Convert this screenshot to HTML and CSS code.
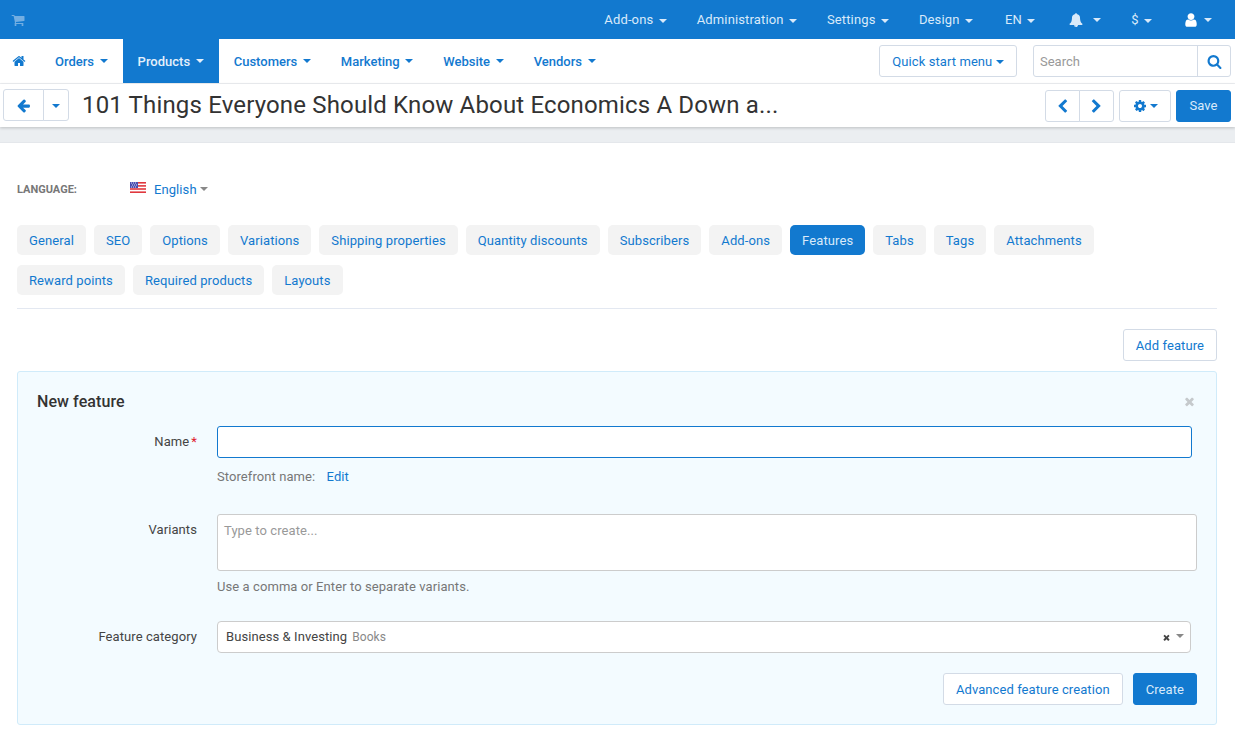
FILE: index.html
```html
<!DOCTYPE html>
<html lang="en">
<head>
<meta charset="UTF-8" />
<meta name="viewport" content="width=device-width, initial-scale=1" />
<title>Edit product</title>
<link rel="stylesheet" href="styles.css">
</head>
<body>

<svg class="sprite" xmlns="http://www.w3.org/2000/svg">
  <symbol id="i-cart" viewBox="0 0 1792 1792"><path d="M704 1536q0 52-38 90t-90 38-90-38-38-90 38-90 90-38 90 38 38 90zm896 0q0 52-38 90t-90 38-90-38-38-90 38-90 90-38 90 38 38 90zm128-1088v512q0 24-16.500 42.500t-40.500 21.500l-1044 122q13 60 13 70 0 16-24 64h920q26 0 45 19t19 45-19 45-45 19h-1024q-26 0-45-19t-19-45q0-11 8-31.500t16-36 21.500-40 15.500-29.500l-177-823h-204q-26 0-45-19t-19-45 19-45 45-19h256q16 0 28.500 6.500t19.500 15.500 13 24.500 8 26 5.500 29.500 4.500 26h1201q26 0 45 19t19 45z"/></symbol>
  <symbol id="i-home" viewBox="0 0 1792 1792"><path d="M1472 992v480q0 26-19 45t-45 19h-384v-384h-256v384h-384q-26 0-45-19t-19-45v-480q0-1 .5-3t.5-3l575-474 575 474q1 2 1 6zm223-69l-62 74q-8 9-21 11h-3q-13 0-21-7l-692-577-692 577q-12 8-24 7-13-2-21-11l-62-74q-8-10-7-23.500t11-21.500l719-599q32-26 76-26t76 26l244 204v-195q0-14 9-23t23-9h192q14 0 23 9t9 23v408l219 182q10 8 11 21.500t-7 23.500z"/></symbol>
  <symbol id="i-bell" viewBox="0 0 1792 1792"><path d="M912 1696q0-16-16-16-59 0-101.500-42.500t-42.500-101.500q0-16-16-16t-16 16q0 73 51.500 124.500t124.500 51.500q16 0 16-16zm816-288q0 52-38 90t-90 38h-448q0 106-75 181t-181 75-181-75-75-181h-448q-52 0-90-38t-38-90q50-42 91-88t85-119.500 74.500-158.500 50-206 19.500-260q0-152 117-282.500t307-158.500q-8-19-8-39 0-40 28-68t68-28 68 28 28 68q0 20-8 39 190 28 307 158.500t117 282.500q0 139 19.500 260t50 206 74.500 158.500 85 119.500 91 88z"/></symbol>
  <symbol id="i-user" viewBox="0 0 1792 1792"><path d="M1536 1399q0 109-62.500 187t-150.500 78h-854q-88 0-150.500-78t-62.500-187q0-85 8.500-160.500t31.500-152 58.500-131 94-89 134.500-34.500q131 128 313 128t313-128q76 0 134.500 34.500t94 89 58.500 131 31.500 152 8.500 160.500zm-256-887q0 159-112.500 271.500t-271.500 112.500-271.500-112.500-112.500-271.500 112.500-271.500 271.500-112.500 271.500 112.500 112.500 271.500z"/></symbol>
  <symbol id="i-search" viewBox="0 0 1792 1792"><path d="M1216 832q0-185-131.500-316.500t-316.500-131.500-316.500 131.500-131.500 316.500 131.500 316.500 316.500 131.500 316.500-131.500 131.500-316.500zm512 832q0 52-38 90t-90 38q-54 0-90-38l-343-342q-179 124-399 124-143 0-273.500-55.500t-225-150-150-225-55.500-273.500 55.500-273.500 150-225 225-150 273.500-55.500 273.500 55.500 225 150 150 225 55.500 273.500q0 220-124 399l343 343q37 37 37 90z"/></symbol>
  <symbol id="i-back" viewBox="0 0 1792 1792"><path d="M1664 896v128q0 53-32.500 90.500t-84.500 37.500h-704l293 294q38 36 38 90t-38 90l-75 76q-37 37-90 37-52 0-91-37l-651-652q-37-37-37-90 0-52 37-91l651-650q38-38 91-38 52 0 90 38l75 74q38 38 38 91t-38 91l-293 293h704q52 0 84.500 37.500t32.500 90.500z"/></symbol>
  <symbol id="i-prev" viewBox="0 0 1792 1792"><path d="M1427 301l-531 531 531 531q19 19 19 45t-19 45l-166 166q-19 19-45 19t-45-19l-742-742q-19-19-19-45t19-45l742-742q19-19 45-19t45 19l166 166q19 19 19 45t-19 45z"/></symbol>
  <symbol id="i-next" viewBox="0 0 1792 1792"><path d="M1363 877l-742 742q-19 19-45 19t-45-19l-166-166q-19-19-19-45t19-45l531-531-531-531q-19-19-19-45t19-45l166-166q19-19 45-19t45 19l742 742q19 19 19 45t-19 45z"/></symbol>
  <symbol id="i-cog" viewBox="0 0 1792 1792"><path d="M1152 896q0-106-75-181t-181-75-181 75-75 181 75 181 181 75 181-75 75-181zm512-109v222q0 12-8 23t-20 13l-185 28q-19 54-39 91 35 50 107 138 10 12 10 25t-9 23q-27 37-99 108t-94 71q-12 0-26-9l-138-108q-44 23-91 38-16 136-29 186-7 28-36 28h-222q-14 0-24.500-8.500t-11.500-21.500l-28-184q-49-16-90-37l-141 107q-10 9-25 9-14 0-25-11-126-114-165-168-7-10-7-23 0-12 8-23 15-21 51-66.500t54-70.500q-27-50-41-99l-183-27q-13-2-21-12.500t-8-23.500v-222q0-12 8-23t19-13l186-28q14-46 39-92-40-57-107-138-10-12-10-24 0-10 9-23 26-36 98.500-107.500t94.500-71.500q13 0 26 10l138 107q44-23 91-38 16-136 29-186 7-28 36-28h222q14 0 24.500 8.500t11.500 21.500l28 184q49 16 90 37l142-107q9-9 24-9 13 0 25 10 129 119 165 170 7 8 7 22 0 12-8 23-15 21-51 66.500t-54 70.500q26 50 41 98l183 28q13 2 21 12.500t8 23.500z"/></symbol>
  <symbol id="i-times" viewBox="0 0 1792 1792"><path d="M1490 1322q0 40-28 68l-136 136q-28 28-68 28t-68-28l-294-294-294 294q-28 28-68 28t-68-28l-136-136q-28-28-28-68t28-68l294-294-294-294q-28-28-28-68t28-68l136-136q28-28 68-28t68 28l294 294 294-294q28-28 68-28t68 28l136 136q28 28 28 68t-28 68l-294 294 294 294q28 28 28 68z"/></symbol>
</svg>

<header class="topbar">
  <svg class="icon cart-icon"><use href="#i-cart"/></svg>
  <nav class="topmenu">
    <a class="top-addons">Add-ons <i class="caret"></i></a>
    <a class="top-admin">Administration <i class="caret"></i></a>
    <a class="top-settings">Settings <i class="caret"></i></a>
    <a class="top-design">Design <i class="caret"></i></a>
    <a class="top-lang">EN <i class="caret"></i></a>
    <a class="top-bell"><svg class="icon bell-icon"><use href="#i-bell"/></svg><i class="caret"></i></a>
    <a class="top-cur">$ <i class="caret"></i></a>
    <a class="top-user"><svg class="icon user-icon"><use href="#i-user"/></svg><i class="caret"></i></a>
  </nav>
</header>

<div class="mainnav">
  <a class="nav-home"><svg class="icon home-icon"><use href="#i-home"/></svg></a>
  <a>Orders <i class="caret"></i></a>
  <a class="active">Products <i class="caret"></i></a>
  <a>Customers <i class="caret"></i></a>
  <a>Marketing <i class="caret"></i></a>
  <a>Website <i class="caret"></i></a>
  <a>Vendors <i class="caret"></i></a>
  <div class="nav-right">
    <button class="btn quick-btn">Quick start menu <i class="caret"></i></button>
    <div class="search-box">
      <input type="text" placeholder="Search" />
      <button><svg class="icon search-icon"><use href="#i-search"/></svg></button>
    </div>
  </div>
</div>

<div class="toolbar">
  <div class="btn-group back-group">
    <button class="btn back-btn"><svg class="icon back-icon"><use href="#i-back"/></svg></button>
    <button class="btn back-more"><i class="caret"></i></button>
  </div>
  <h1>101 Things Everyone Should Know About Economics A Down a...</h1>
  <div class="toolbar-right">
    <div class="btn-group">
      <button class="btn arrow-btn"><svg class="icon arrow-icon"><use href="#i-prev"/></svg></button>
      <button class="btn arrow-btn"><svg class="icon arrow-icon"><use href="#i-next"/></svg></button>
    </div>
    <button class="btn cog-btn"><svg class="icon cog-icon"><use href="#i-cog"/></svg><i class="caret"></i></button>
    <button class="btn btn-primary save-btn">Save</button>
  </div>
</div>
<div class="band"></div>

<main class="content">
  <div class="language">
    <span class="language-label">LANGUAGE:</span>
    <svg class="flag" viewBox="0 0 16 11">
      <rect width="16" height="11" fill="#fff"/>
      <rect width="16" height="1.6" fill="#e0383e"/>
      <rect y="3.1" width="16" height="1.6" fill="#e0383e"/>
      <rect y="6.2" width="16" height="1.6" fill="#e0383e"/>
      <rect y="9.4" width="16" height="1.6" fill="#e0383e"/>
      <rect width="8" height="6" fill="#4a4fb0"/>
      <path d="M1 1h1M3 1h1M5 1h1M2 3h1M4 3h1M6 3h1M1 5h1M3 5h1M5 5h1" stroke="#fff" stroke-width=".8"/>
    </svg>
    <a class="language-link">English</a><i class="caret caret-gray"></i>
  </div>

  <ul class="tabs">
    <li>General</li>
    <li>SEO</li>
    <li>Options</li>
    <li>Variations</li>
    <li>Shipping properties</li>
    <li>Quantity discounts</li>
    <li>Subscribers</li>
    <li>Add-ons</li>
    <li class="active">Features</li>
    <li>Tabs</li>
    <li>Tags</li>
    <li>Attachments</li>
    <li>Reward points</li>
    <li>Required products</li>
    <li>Layouts</li>
  </ul>

  <div class="actions">
    <button class="btn">Add feature</button>
  </div>

  <section class="panel">
    <div class="panel-head">
      <h3>New feature</h3>
      <svg class="icon close-icon"><use href="#i-times"/></svg>
    </div>

    <div class="row row-name">
      <label>Name<span class="req">*</span></label>
      <div class="field">
        <input class="text-input" type="text" />
        <p class="hint">Storefront name: <a>Edit</a></p>
      </div>
    </div>

    <div class="row row-variants">
      <label>Variants</label>
      <div class="field">
        <div class="tag-input">Type to create...</div>
        <p class="hint">Use a comma or Enter to separate variants.</p>
      </div>
    </div>

    <div class="row row-category">
      <label>Feature category</label>
      <div class="field">
        <div class="select-box">
          <span class="select-value">Business &amp; Investing</span>
          <span class="select-path">Books</span>
          <svg class="icon clear-icon"><use href="#i-times"/></svg>
          <i class="caret caret-gray"></i>
        </div>
      </div>
    </div>

    <div class="panel-foot">
      <button class="btn">Advanced feature creation</button>
      <button class="btn btn-primary">Create</button>
    </div>
  </section>
</main>

</body>
</html>
```

FILE: styles.css
```css
* {
  box-sizing: border-box;
}
html, body {
  height: 100%;
}
body {
  margin: 0;
  font-family: Roboto, sans-serif;
  font-size: 13px;
  letter-spacing: .08px;
  color: #333;
  background: #fff;
  overflow: hidden;
}
a {
  color: #1279cf;
}
.sprite {
  display: none;
}
.icon {
  display: inline-block;
  fill: currentColor;
}
.caret {
  display: inline-block;
  width: 0;
  height: 0;
  margin-left: 3px;
  vertical-align: middle;
  border-top: 4px solid currentColor;
  border-left: 4px solid transparent;
  border-right: 4px solid transparent;
}
.caret-gray {
  color: #888;
}

/* top bar */
.topbar {
  display: flex;
  align-items: center;
  height: 39px;
  padding-left: 11px;
  background: #1279cf;
}
.cart-icon {
  width: 14px;
  height: 14px;
  color: #73aee2;
}
.topmenu {
  display: flex;
  align-items: center;
  margin-left: auto;
  padding-right: 23px;
}
.topmenu a {
  color: #d9eafa;
  font-size: 13px;
  letter-spacing: .14px;
  white-space: nowrap;
}
.topmenu .caret {
  margin-left: 2px;
}
.top-admin, .top-settings, .top-design {
  margin-left: 30px;
}
.top-lang {
  margin-left: 32px;
}
.top-bell {
  display: flex;
  align-items: center;
  margin-left: 34px;
}
.bell-icon {
  width: 14px;
  height: 14px;
  margin-right: 8px;
  color: #d9eafa;
}
.top-cur {
  margin-left: 30px;
}
.top-user {
  display: flex;
  align-items: center;
  margin-left: 31px;
}
.user-icon {
  width: 16px;
  height: 16px;
  margin-right: 3px;
  color: #fff;
}

/* main nav */
.mainnav {
  display: flex;
  align-items: stretch;
  height: 45px;
  border-bottom: 1px solid #eef0f3;
}
.mainnav > a {
  display: flex;
  align-items: center;
  gap: 3.6px;
  height: 44px;
  padding: 0 15px;
  font-weight: 500;
  letter-spacing: 0;
  white-space: nowrap;
}
.mainnav > a .caret {
  margin-left: 2px;
}
.mainnav > a.active {
  background: #1279cf;
  color: #e4f0fb;
}
.mainnav > a.nav-home {
  padding: 0 14px 0 12px;
}
.home-icon {
  width: 14px;
  height: 14px;
}
.nav-right {
  display: flex;
  align-items: flex-start;
  gap: 16px;
  margin-left: auto;
  padding: 6px 4px 0 0;
}
.btn {
  height: 32px;
  padding: 0 12px;
  font-family: inherit;
  font-size: 13px;
  letter-spacing: inherit;
  color: #1279cf;
  background: #fff;
  border: 1px solid #d3dbe6;
  border-radius: 3px;
  white-space: nowrap;
  cursor: pointer;
}
.btn-primary {
  color: #d9eafa;
  background: #1279cf;
  border-color: #1279cf;
}
.quick-btn {
  width: 138px;
  padding: 0;
}
.quick-btn .caret {
  margin-left: 0;
}
.search-box {
  display: flex;
  width: 198px;
  height: 32px;
  border: 1px solid #d3dbe6;
  border-radius: 3px;
}
.search-box input {
  flex: 1;
  min-width: 0;
  padding: 0 6px;
  font-family: inherit;
  font-size: 13px;
  border: 0;
  background: transparent;
}
.search-box input::placeholder {
  color: #999;
}
.search-box button {
  width: 33px;
  padding: 0;
  color: #1279cf;
  background: transparent;
  border: 0;
  border-left: 1px solid #d3dbe6;
}
.search-icon {
  width: 15px;
  height: 15px;
  vertical-align: middle;
}

/* toolbar */
.toolbar {
  display: flex;
  align-items: center;
  height: 43px;
  padding: 0 4px 0 3px;
  background: #fff;
  box-shadow: 0 1px 3px rgba(0,0,0,0.2);
  position: relative;
}
.btn-group {
  display: flex;
}
.btn-group .btn:first-child {
  border-radius: 3px 0 0 3px;
}
.btn-group .btn:last-child {
  margin-left: -1px;
  border-radius: 0 3px 3px 0;
}
.back-group {
  margin-top: -2px;
}
.back-btn {
  width: 41px;
  padding: 0;
}
.back-more {
  width: 26px;
  padding: 0;
}
.back-more .caret {
  margin-left: 0;
}
.back-icon {
  width: 15px;
  height: 15px;
  vertical-align: middle;
}
.toolbar h1 {
  margin: -2px 0 0 13px;
  font-size: 24px;
  font-weight: 400;
  line-height: 30px;
  letter-spacing: .16px;
  color: #333;
  white-space: nowrap;
}
.toolbar-right {
  display: flex;
  gap: 5px;
  margin-left: auto;
}
.arrow-btn {
  width: 35px;
  padding: 0;
}
.arrow-icon {
  width: 15px;
  height: 15px;
  vertical-align: middle;
}
.cog-btn {
  width: 52px;
  padding: 0;
}
.cog-icon {
  width: 14px;
  height: 14px;
  vertical-align: middle;
}
.save-btn {
  width: 55px;
  padding: 0;
}
.band {
  height: 16px;
  background: #ebeef1;
  border-bottom: 1px solid #e4e7eb;
}

/* content */
.content {
  padding: 36px 18px 0 17px;
}
.language {
  display: flex;
  align-items: center;
  height: 20px;
}
.language-label {
  width: 113px;
  font-size: 11px;
  font-weight: 700;
  letter-spacing: 0;
  color: #777;
}
.flag {
  width: 16px;
  height: 11px;
  margin: -3px 8px 0 0;
}
.language-link {
  font-size: 13px;
}
.tabs {
  display: flex;
  flex-wrap: wrap;
  gap: 10px 8px;
  margin: 26px 0 0;
  padding: 0 30px 13px 0;
  list-style: none;
  border-bottom: 1px solid #e3e8f1;
}
.tabs li {
  height: 30px;
  padding: 0 12px;
  line-height: 31px;
  letter-spacing: .1px;
  color: #1279cf;
  background: #f3f3f3;
  border-radius: 5px;
  white-space: nowrap;
}
.tabs li.active {
  color: #d9eafa;
  background: #1279cf;
}
.actions {
  display: flex;
  justify-content: flex-end;
  margin-top: 20px;
}
.panel {
  height: 354px;
  margin-top: 10px;
  padding: 19px 19px 0 19px;
  background: #f3fbff;
  border: 1px solid #d0ebfa;
  border-radius: 3px;
}
.panel-head {
  display: flex;
  align-items: center;
  justify-content: space-between;
  height: 20px;
  padding-right: 1px;
}
.panel-head h3 {
  margin: 0;
  font-size: 16px;
  font-weight: 500;
  color: #333;
}
.close-icon {
  width: 13px;
  height: 13px;
  color: #c5c9cc;
}
.row {
  display: flex;
}
.row label {
  flex: none;
  width: 160px;
  padding-top: 8px;
  text-align: right;
  color: #444;
}
.row-name {
  margin-top: 15px;
}
.row-variants {
  margin-top: 29px;
}
.row-category {
  margin-top: 26px;
}
.req {
  margin-left: 2px;
  color: #e0192c;
}
.field {
  flex: 1;
  margin-left: 20px;
}
.text-input {
  display: block;
  width: 975px;
  height: 32px;
  border: 1px solid #1279cf;
  border-radius: 3px;
  background: #fff;
}
.hint {
  margin: 11px 0 0;
  line-height: 16px;
  color: #777;
}
.hint a {
  margin-left: 8px;
}
.tag-input {
  height: 57px;
  padding: 8px 6px;
  color: #999;
  background: #fff;
  border: 1px solid #ccc;
  border-radius: 3px;
}
.row-variants .hint {
  margin-top: 8px;
}
.select-box {
  display: flex;
  align-items: center;
  width: 974px;
  height: 32px;
  padding: 0 6px 2px 8px;
  background: #fff;
  border: 1px solid #ccc;
  border-radius: 4px;
}
.select-value {
  color: #444;
}
.select-path {
  margin: 2px 0 0 5px;
  font-size: 12px;
  color: #888;
}
.clear-icon {
  width: 9px;
  height: 9px;
  margin: 3px 0 0 auto;
  color: #444;
}
.select-box .caret {
  margin: 0 0 0 5px;
}
.panel-foot {
  display: flex;
  justify-content: flex-end;
  gap: 10px;
  margin-top: 20px;
}
```
